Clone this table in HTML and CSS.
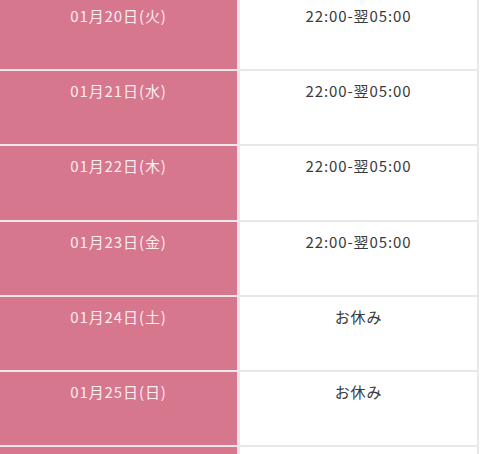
FILE: index.html
```html
<!DOCTYPE html>
<html lang="ja">
<head>
<meta charset="utf-8">
<link rel="stylesheet" href="styles.css">
</head>
<body>
<div class="schedule">
  <div class="day">01月20日(火)</div><div class="time">22:00-翌05:00</div>
  <div class="day">01月21日(水)</div><div class="time">22:00-翌05:00</div>
  <div class="day">01月22日(木)</div><div class="time">22:00-翌05:00</div>
  <div class="day">01月23日(金)</div><div class="time">22:00-翌05:00</div>
  <div class="day">01月24日(土)</div><div class="time">お休み</div>
  <div class="day">01月25日(日)</div><div class="time">お休み</div>
  <div class="day"></div><div class="time"></div>
</div>
</body>
</html>
```

FILE: styles.css
```css
html, body {
  margin: 0;
  padding: 0;
  background: #ffffff;
  overflow: hidden;
}
body {
  font-family: "Noto Sans CJK JP", "Noto Sans", sans-serif;
  font-size: 15px;
}
.schedule {
  width: 477px;
  margin-top: -4px;
  padding-right: 2px;
  background: #e8e8e8;
  display: grid;
  grid-template-columns: 237px 1fr;
  column-gap: 3px;
  row-gap: 2px;
  grid-auto-rows: 73.2px;
}
.day, .time {
  padding-top: 9px;
  line-height: 22px;
  text-align: center;
  box-sizing: border-box;
  letter-spacing: 0.9px;
}
.day {
  background: #d6778e;
  color: #fbecf0;
}
.time {
  background: #ffffff;
  color: #3a3a3a;
}
```
